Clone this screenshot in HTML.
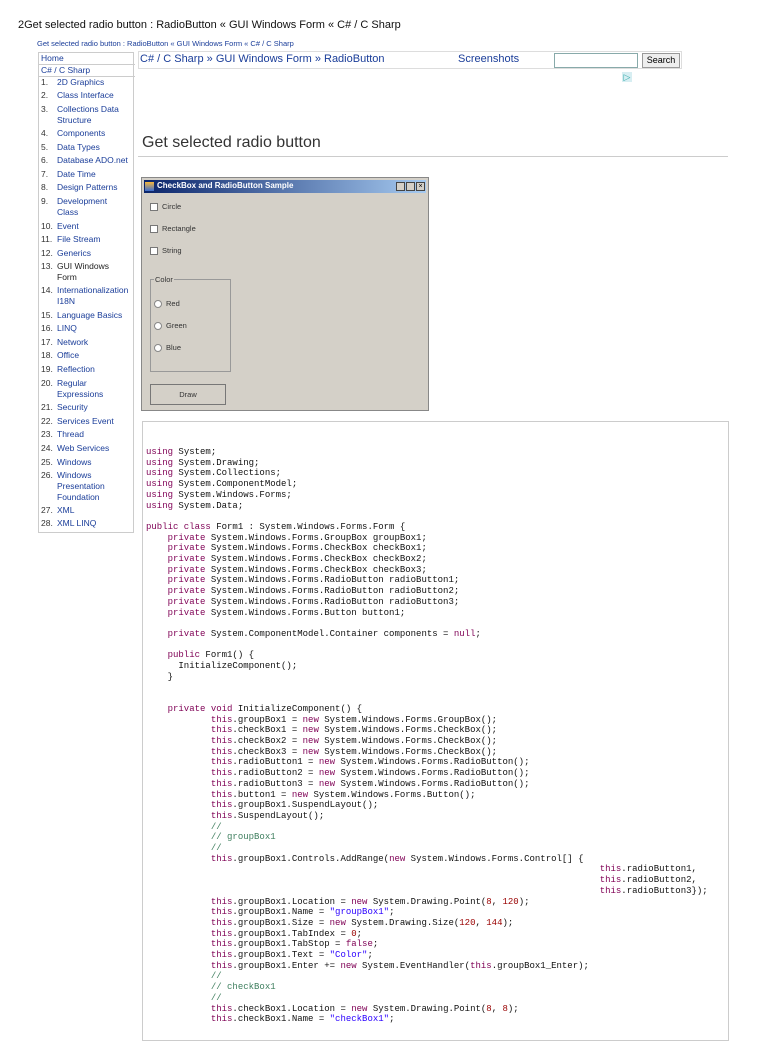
<!DOCTYPE html>
<html><head><meta charset="utf-8"><style>
body{margin:0;width:768px;height:1024px;overflow:hidden;background:#fff;font-family:"Liberation Sans",sans-serif;position:relative}
.a{position:absolute;white-space:nowrap}
.side{position:absolute;left:38px;top:52px;width:96px;height:481px;border:1px solid #ccc;box-sizing:border-box}
.si{position:absolute;font-size:8.5px;line-height:11px;color:#1a3d99}
.si b{font-weight:normal;color:#333;position:absolute;left:1px}
.si span{position:absolute;left:17px;white-space:nowrap}
.code{position:absolute;left:142px;top:421px;width:587px;height:620px;border:1px solid #ccc;box-sizing:border-box}
.cl{position:absolute;font-family:"Liberation Mono",monospace;font-size:9px;line-height:10.7px;white-space:pre;color:#111}
.k{color:#7f0055}.s{color:#2a00ff}.c{color:#3f7f5f}.n{color:#990000}
</style></head><body>
<div class="a" style="left:18px;top:19px;font-size:11px;color:#111">2Get selected radio button : RadioButton « GUI Windows Form « C# / C Sharp</div>
<div class="a" style="left:37px;top:39px;font-size:7.5px;color:#1a3d99">Get selected radio button : RadioButton « GUI Windows Form « C# / C Sharp</div>

<div class="side">
<div style="position:absolute;left:0;top:0;width:94px;height:11px;border-bottom:1px solid #ccc;font-size:8.5px;line-height:10px;color:#1a3d99;padding-left:2px">Home</div>
<div style="position:absolute;left:0;top:12px;width:94px;height:11px;border-bottom:1px solid #ccc;font-size:8.5px;line-height:11px;color:#1a3d99;padding-left:2px">C# / C Sharp</div>
</div>

<div style="position:absolute;left:138px;top:51px;width:544px;height:18px;border:1px solid #ddd;box-sizing:border-box;background:#fff"></div>
<div class="a" style="left:140px;top:53px;font-size:11px;color:#1a3d99">C# / C Sharp » GUI Windows Form » RadioButton</div>
<div class="a" style="left:458px;top:53px;font-size:11px;color:#1a3d99">Screenshots</div>
<div style="position:absolute;left:554px;top:53px;width:84px;height:15px;border:1px solid #8aa;box-sizing:border-box"></div>
<div class="a" style="left:642px;top:53px;width:38px;height:15px;border:1px solid #999;box-sizing:border-box;background:#eee;font-size:9px;text-align:center;line-height:13px">Search</div>
<div class="a" style="left:622px;top:72px;width:10px;height:10px;background:#d7eef2;color:#3aa;font-size:9px;line-height:10px;text-align:center">▷</div>

<div class="a" style="left:142px;top:134px;font-size:16px;color:#333">Get selected radio button</div>
<div style="position:absolute;left:138px;top:156px;width:590px;height:1px;background:#ccc"></div>

<div style="position:absolute;left:141px;top:177px;width:288px;height:234px;background:#d4d0c8;border:1px solid #888;box-sizing:border-box">
<div style="position:absolute;left:2px;top:2px;right:2px;height:13px;background:linear-gradient(90deg,#0a246a,#a6caf0)"></div>
<div style="position:absolute;left:3px;top:4px;width:9px;height:9px;background:linear-gradient(#f6b73c,#3a6cd0)"></div>
<div class="a" style="left:15px;top:3px;font-size:8px;font-weight:bold;color:#fff">CheckBox and RadioButton Sample</div>
<div class="a" style="left:254px;top:4px;width:9px;height:9px;background:#d4d0c8;border:1px solid #444;box-sizing:border-box"></div>
<div class="a" style="left:264px;top:4px;width:9px;height:9px;background:#d4d0c8;border:1px solid #444;box-sizing:border-box"></div>
<div class="a" style="left:274px;top:4px;width:9px;height:9px;background:#d4d0c8;border:1px solid #444;box-sizing:border-box;font-size:7px;line-height:7px;text-align:center">×</div>
<div class="a" style="left:8px;top:25px;width:8px;height:8px;background:#fff;border:1px solid #777;box-sizing:border-box"></div><div class="a" style="left:20px;top:24px;font-size:7.5px;color:#333">Circle</div>
<div class="a" style="left:8px;top:47px;width:8px;height:8px;background:#fff;border:1px solid #777;box-sizing:border-box"></div><div class="a" style="left:20px;top:46px;font-size:7.5px;color:#333">Rectangle</div>
<div class="a" style="left:8px;top:69px;width:8px;height:8px;background:#fff;border:1px solid #777;box-sizing:border-box"></div><div class="a" style="left:20px;top:68px;font-size:7.5px;color:#333">String</div>
<div class="a" style="left:8px;top:101px;width:81px;height:93px;border:1px solid #999;box-sizing:border-box"></div>
<div class="a" style="left:12px;top:97px;font-size:7.5px;color:#333;background:#d4d0c8;padding:0 1px">Color</div>
<div class="a" style="left:12px;top:122px;width:8px;height:8px;border-radius:50%;background:#fff;border:1px solid #888;box-sizing:border-box"></div><div class="a" style="left:24px;top:121px;font-size:7.5px;color:#333">Red</div>
<div class="a" style="left:12px;top:144px;width:8px;height:8px;border-radius:50%;background:#fff;border:1px solid #888;box-sizing:border-box"></div><div class="a" style="left:24px;top:143px;font-size:7.5px;color:#333">Green</div>
<div class="a" style="left:12px;top:166px;width:8px;height:8px;border-radius:50%;background:#fff;border:1px solid #888;box-sizing:border-box"></div><div class="a" style="left:24px;top:165px;font-size:7.5px;color:#333">Blue</div>
<div class="a" style="left:8px;top:206px;width:76px;height:21px;border:1px solid #777;box-sizing:border-box;font-size:7.5px;line-height:19px;text-align:center;color:#333">Draw</div>
</div>

<div class="code"></div>
<div class="cl" style="left:146px;top:447px"><span class="k">using</span> System;
<span class="k">using</span> System.Drawing;
<span class="k">using</span> System.Collections;
<span class="k">using</span> System.ComponentModel;
<span class="k">using</span> System.Windows.Forms;
<span class="k">using</span> System.Data;

<span class="k">public class</span> Form1 : System.Windows.Forms.Form {
    <span class="k">private</span> System.Windows.Forms.GroupBox groupBox1;
    <span class="k">private</span> System.Windows.Forms.CheckBox checkBox1;
    <span class="k">private</span> System.Windows.Forms.CheckBox checkBox2;
    <span class="k">private</span> System.Windows.Forms.CheckBox checkBox3;
    <span class="k">private</span> System.Windows.Forms.RadioButton radioButton1;
    <span class="k">private</span> System.Windows.Forms.RadioButton radioButton2;
    <span class="k">private</span> System.Windows.Forms.RadioButton radioButton3;
    <span class="k">private</span> System.Windows.Forms.Button button1;

    <span class="k">private</span> System.ComponentModel.Container components = <span class="k">null</span>;

    <span class="k">public</span> Form1() {
      InitializeComponent();
    }


    <span class="k">private void</span> InitializeComponent() {
            <span class="k">this</span>.groupBox1 = <span class="k">new</span> System.Windows.Forms.GroupBox();
            <span class="k">this</span>.checkBox1 = <span class="k">new</span> System.Windows.Forms.CheckBox();
            <span class="k">this</span>.checkBox2 = <span class="k">new</span> System.Windows.Forms.CheckBox();
            <span class="k">this</span>.checkBox3 = <span class="k">new</span> System.Windows.Forms.CheckBox();
            <span class="k">this</span>.radioButton1 = <span class="k">new</span> System.Windows.Forms.RadioButton();
            <span class="k">this</span>.radioButton2 = <span class="k">new</span> System.Windows.Forms.RadioButton();
            <span class="k">this</span>.radioButton3 = <span class="k">new</span> System.Windows.Forms.RadioButton();
            <span class="k">this</span>.button1 = <span class="k">new</span> System.Windows.Forms.Button();
            <span class="k">this</span>.groupBox1.SuspendLayout();
            <span class="k">this</span>.SuspendLayout();
            <span class="c">//</span>
            <span class="c">// groupBox1</span>
            <span class="c">//</span>
            <span class="k">this</span>.groupBox1.Controls.AddRange(<span class="k">new</span> System.Windows.Forms.Control[] {
                                                                                    <span class="k">this</span>.radioButton1,
                                                                                    <span class="k">this</span>.radioButton2,
                                                                                    <span class="k">this</span>.radioButton3});
            <span class="k">this</span>.groupBox1.Location = <span class="k">new</span> System.Drawing.Point(<span class="n">8</span>, <span class="n">120</span>);
            <span class="k">this</span>.groupBox1.Name = <span class="s">"groupBox1"</span>;
            <span class="k">this</span>.groupBox1.Size = <span class="k">new</span> System.Drawing.Size(<span class="n">120</span>, <span class="n">144</span>);
            <span class="k">this</span>.groupBox1.TabIndex = <span class="n">0</span>;
            <span class="k">this</span>.groupBox1.TabStop = <span class="k">false</span>;
            <span class="k">this</span>.groupBox1.Text = <span class="s">"Color"</span>;
            <span class="k">this</span>.groupBox1.Enter += <span class="k">new</span> System.EventHandler(<span class="k">this</span>.groupBox1_Enter);
            <span class="c">//</span>
            <span class="c">// checkBox1</span>
            <span class="c">//</span>
            <span class="k">this</span>.checkBox1.Location = <span class="k">new</span> System.Drawing.Point(<span class="n">8</span>, <span class="n">8</span>);
            <span class="k">this</span>.checkBox1.Name = <span class="s">"checkBox1"</span>;
</div>

<div class="si" style="left:40px;top:77px"><b>1.</b><span>2D Graphics</span></div>
<div class="si" style="left:40px;top:90px"><b>2.</b><span>Class Interface</span></div>
<div class="si" style="left:40px;top:104px"><b>3.</b><span>Collections Data<br>Structure</span></div>
<div class="si" style="left:40px;top:128px"><b>4.</b><span>Components</span></div>
<div class="si" style="left:40px;top:142px"><b>5.</b><span>Data Types</span></div>
<div class="si" style="left:40px;top:155px"><b>6.</b><span>Database ADO.net</span></div>
<div class="si" style="left:40px;top:169px"><b>7.</b><span>Date Time</span></div>
<div class="si" style="left:40px;top:182px"><b>8.</b><span>Design Patterns</span></div>
<div class="si" style="left:40px;top:196px"><b>9.</b><span>Development<br>Class</span></div>
<div class="si" style="left:40px;top:221px"><b>10.</b><span>Event</span></div>
<div class="si" style="left:40px;top:234px"><b>11.</b><span>File Stream</span></div>
<div class="si" style="left:40px;top:248px"><b>12.</b><span>Generics</span></div>
<div class="si" style="left:40px;top:261px"><b>13.</b><span style="color:#222">GUI Windows<br>Form</span></div>
<div class="si" style="left:40px;top:285px"><b>14.</b><span>Internationalization<br>I18N</span></div>
<div class="si" style="left:40px;top:310px"><b>15.</b><span>Language Basics</span></div>
<div class="si" style="left:40px;top:323px"><b>16.</b><span>LINQ</span></div>
<div class="si" style="left:40px;top:337px"><b>17.</b><span>Network</span></div>
<div class="si" style="left:40px;top:350px"><b>18.</b><span>Office</span></div>
<div class="si" style="left:40px;top:364px"><b>19.</b><span>Reflection</span></div>
<div class="si" style="left:40px;top:378px"><b>20.</b><span>Regular<br>Expressions</span></div>
<div class="si" style="left:40px;top:402px"><b>21.</b><span>Security</span></div>
<div class="si" style="left:40px;top:416px"><b>22.</b><span>Services Event</span></div>
<div class="si" style="left:40px;top:429px"><b>23.</b><span>Thread</span></div>
<div class="si" style="left:40px;top:443px"><b>24.</b><span>Web Services</span></div>
<div class="si" style="left:40px;top:457px"><b>25.</b><span>Windows</span></div>
<div class="si" style="left:40px;top:470px"><b>26.</b><span>Windows<br>Presentation<br>Foundation</span></div>
<div class="si" style="left:40px;top:505px"><b>27.</b><span>XML</span></div>
<div class="si" style="left:40px;top:518px"><b>28.</b><span>XML LINQ</span></div>
</body></html>
